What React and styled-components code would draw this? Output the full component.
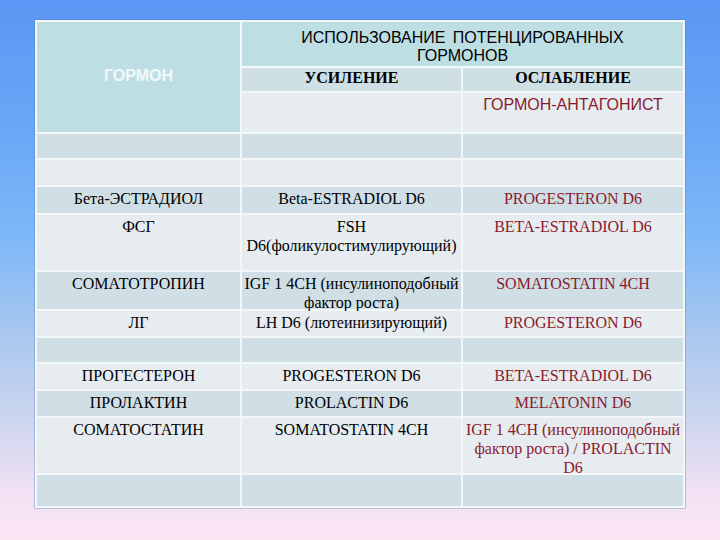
import React from "react";
import styled, { createGlobalStyle } from "styled-components";

const GlobalStyle = createGlobalStyle`
  html, body {
    margin: 0;
    padding: 0;
    width: 720px;
    height: 540px;
    overflow: hidden;
  }
  body {
    background: linear-gradient(
      to bottom,
      #5b97f4 0%,
      #6aa8f6 25%,
      #80b9f8 45%,
      #a9c7ef 62%,
      #cdd6ee 78%,
      #f3e1f3 92%,
      #fbe6f4 100%
    );
  }
`;

const Page = styled.div`
  width: 720px;
  height: 540px;
  box-sizing: border-box;
  padding: 20px 0 0 35px;
`;

const Grid = styled.div`
  display: grid;
  width: 650px;
  box-sizing: border-box;
  padding: 2px;
  gap: 2px;
  background: #f4f7f8;
  box-shadow: 0 0 0 1px rgba(70, 120, 190, 0.35);
  grid-template-columns: 203px 219px 220px;
  grid-template-rows: 44px 23px 39px 24px 25px 26px 55px 37px 25px 24px 25px 25px 55px 31px;
`;

const tones = {
  head: "#bddfe4",
  sub: "#cfdfe6",
  light: "#e7ecf0",
  dark: "#d0dfe6",
};

const Cell = styled.div`
  background: ${(p) => tones[p.$tone] || tones.light};
  box-sizing: border-box;
  text-align: center;
  font-family: "Liberation Serif", "Times New Roman", serif;
  font-size: 16px;
  line-height: 19px;
  color: ${(p) => (p.$red ? "#8a1a2e" : "#000")};
  padding-top: 2px;
  white-space: nowrap;
  overflow: visible;
`;

const HormoneHead = styled.div`
  grid-row: 1 / span 3;
  background: ${tones.head};
  display: flex;
  align-items: center;
  justify-content: center;
  padding-bottom: 3px;
  box-sizing: border-box;
  font-family: "Liberation Sans", Arial, sans-serif;
  font-weight: bold;
  font-size: 16px;
  color: #f2f8f9;
`;

const TitleCell = styled.div`
  grid-column: 2 / span 2;
  background: ${tones.head};
  text-align: center;
  padding-top: 7px;
  box-sizing: border-box;
  font-family: "Liberation Sans", Arial, sans-serif;
  font-size: 16px;
  line-height: 18px;
  word-spacing: 3px;
  color: #000;
`;

const SubHead = styled.div`
  background: ${tones.sub};
  text-align: center;
  font-family: "Liberation Serif", "Times New Roman", serif;
  font-weight: bold;
  font-size: 16px;
  line-height: 19px;
  color: #000;
`;

const EmptyCell = styled.div`
  background: ${(p) => tones[p.$tone]};
`;

const AntagonistCell = styled.div`
  background: ${tones.light};
  text-align: center;
  padding-top: 3px;
  box-sizing: border-box;
  font-family: "Liberation Sans", Arial, sans-serif;
  font-size: 16px;
  line-height: 18px;
  color: #8a1a2e;
`;

const Lines = ({ lines }) =>
  lines.map((l, i) => (
    <React.Fragment key={i}>
      {i > 0 && <br />}
      {l}
    </React.Fragment>
  ));

const rows = [
  { empty: true, tone: "dark" },
  { empty: true, tone: "light" },
  { tone: "dark", a: ["Бета-ЭСТРАДИОЛ"], b: ["Beta-ESTRADIOL D6"], c: ["PROGESTERON D6"] },
  { tone: "light", a: ["ФСГ"], b: ["FSH", "D6(фоликулостимулирующий)"], c: ["BETA-ESTRADIOL D6"] },
  { tone: "dark", a: ["СОМАТОТРОПИН"], b: ["IGF 1 4CH (инсулиноподобный", "фактор роста)"], c: ["SOMATOSTATIN 4CH"] },
  { tone: "light", a: ["ЛГ"], b: ["LH D6 (лютеинизирующий)"], c: ["PROGESTERON D6"] },
  { empty: true, tone: "dark" },
  { tone: "light", a: ["ПРОГЕСТЕРОН"], b: ["PROGESTERON D6"], c: ["BETA-ESTRADIOL D6"] },
  { tone: "dark", a: ["ПРОЛАКТИН"], b: ["PROLACTIN D6"], c: ["MELATONIN D6"] },
  {
    tone: "light",
    a: ["СОМАТОСТАТИН"],
    b: ["SOMATOSTATIN 4CH"],
    c: ["IGF 1 4CH (инсулиноподобный", "фактор роста) / PROLACTIN", "D6"],
  },
  { empty: true, tone: "dark" },
];

export default function App() {
  return (
    <>
      <GlobalStyle />
      <Page>
        <Grid>
          <HormoneHead>ГОРМОН</HormoneHead>
          <TitleCell>
            ИСПОЛЬЗОВАНИЕ ПОТЕНЦИРОВАННЫХ
            <br />
            ГОРМОНОВ
          </TitleCell>
          <SubHead>УСИЛЕНИЕ</SubHead>
          <SubHead>ОСЛАБЛЕНИЕ</SubHead>
          <EmptyCell $tone="light" />
          <AntagonistCell>ГОРМОН-АНТАГОНИСТ</AntagonistCell>
          {rows.map((r, i) =>
            r.empty ? (
              <React.Fragment key={i}>
                <EmptyCell $tone={r.tone} />
                <EmptyCell $tone={r.tone} />
                <EmptyCell $tone={r.tone} />
              </React.Fragment>
            ) : (
              <React.Fragment key={i}>
                <Cell $tone={r.tone}>
                  <Lines lines={r.a} />
                </Cell>
                <Cell $tone={r.tone}>
                  <Lines lines={r.b} />
                </Cell>
                <Cell $tone={r.tone} $red>
                  <Lines lines={r.c} />
                </Cell>
              </React.Fragment>
            )
          )}
        </Grid>
      </Page>
    </>
  );
}
